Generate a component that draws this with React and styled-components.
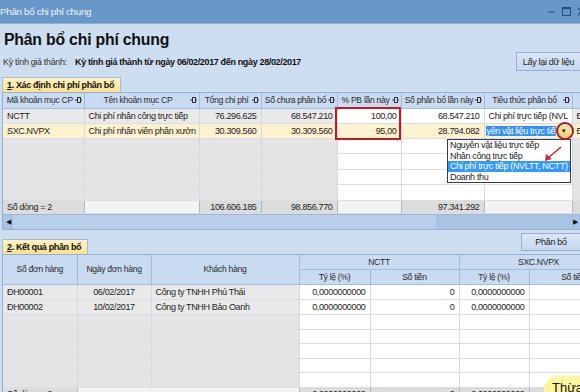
import React from "react";
import styled, { createGlobalStyle } from "styled-components";

const FONT = `"Liberation Sans", Arial, sans-serif`;

const Global = createGlobalStyle`
  html, body { margin: 0; padding: 0; }
  body {
    width: 580px; height: 392px; overflow: hidden;
    background: #cedef1;
    font-family: ${FONT};
    font-size: 9px;
    letter-spacing: -0.35px;
    color: #1e1e1e;
  }
`;

const Window = styled.div`
  position: relative;
  width: 580px;
  height: 392px;
  overflow: hidden;
  background: #cedef1;
`;

const TitleBar = styled.div`
  height: 23px;
  display: flex;
  align-items: center;
  justify-content: space-between;
  background: #6798c9;
  border-bottom: 1px solid #8fb2d9;
  color: #eef4fb;
  font-size: 9.8px;
  letter-spacing: -0.3px;
`;

const WinControls = styled.div`
  display: flex;
  align-items: center;
  gap: 6px;
  margin-right: -6px;
`;

const Heading = styled.h1`
  margin: 5px 0 0 4px;
  height: 22px;
  line-height: 22px;
  font-size: 15.8px;
  letter-spacing: -0.2px;
  font-weight: bold;
  color: #101010;
`;

const PeriodRow = styled.div`
  display: flex;
  align-items: center;
  height: 19px;
  padding-left: 3px;
  margin-top: 1px;
`;

const PeriodLabel = styled.span`
  width: 72px;
  color: #333;
`;

const PeriodValue = styled.span`
  flex: 1;
  font-weight: bold;
  color: #111;
`;

const Button = styled.button`
  font-family: ${FONT};
  font-size: 9px;
  letter-spacing: -0.3px;
  color: #222;
  height: ${(p) => p.$h || 19}px;
  width: ${(p) => p.$w}px;
  padding: 0;
  background: linear-gradient(#d9e6f6, #c6d8ef);
  border: 1px solid #93afd3;
  border-right: none;
  border-radius: 0;
`;

const Section = styled.div`
  position: relative;
  padding-left: 2px;
  margin-top: ${(p) => p.$mt || 0}px;
`;

const TabHead = styled.div`
  display: inline-flex;
  align-items: center;
  height: 14px;
  padding: 0 6px 0 4px;
  background: linear-gradient(#fff3c4, #fbe08f);
  border: 1px solid #a7bcd8;
  border-bottom: none;
  font-weight: bold;
  color: #111;
  u { text-decoration: underline; }
`;

const GridBox = styled.div`
  border: 1px solid #94b0d4;
  border-right: none;
  background: #cedef1;
  overflow: hidden;
`;

const Table = styled.table`
  border-collapse: collapse;
  table-layout: fixed;
  width: ${(p) => p.$w}px;
`;

const Th = styled.th`
  height: 15px;
  box-sizing: border-box;
  padding: 0;
  background: #c8dbf1;
  border-right: 1px solid #a2bcdc;
  border-bottom: 1px solid #a2bcdc;
  font-weight: normal;
  font-size: 8.6px;
  letter-spacing: -0.3px;
  color: #2b2b2b;
  white-space: nowrap;
  overflow: hidden;
  text-align: center;
`;

const HeadInner = styled.div`
  display: flex;
  align-items: center;
  padding: 0 2px;
`;

const HeadText = styled.span`
  flex: 1;
  text-align: center;
  white-space: nowrap;
`;

const Tr = styled.tr`
  height: ${(p) => p.$h || 15}px;
`;

const Td = styled.td`
  padding: 0 4px;
  background: ${(p) => p.$bg || "#ffffff"};
  text-align: ${(p) => p.$align || "left"};
  border-right: 1px solid #d3d9e2;
  border-bottom: 1px solid #d9dee6;
  white-space: nowrap;
  overflow: hidden;
  color: #1d1d1d;
`;

const FootTd = styled(Td)`
  border-top: 1px solid #9fb7d6;
  border-right: 1px solid #aab9cc;
`;

const Scrollbar = styled.div`
  display: flex;
  align-items: center;
  height: 14px;
  background: #a9c3e3;
  border-top: 1px solid #9fb7d6;
`;

const ScrollArrow = styled.span`
  width: 10px;
  font-size: 7px;
  text-align: center;
  color: #111;
`;

const ScrollThumb = styled.div`
  width: 423px;
  height: 14px;
  background: #b9cfea;
`;

const ScrollTrack = styled.div`
  flex: 1;
`;

const SelText = styled.span`
  display: inline-block;
  background: #3390ff;
  color: #fff;
  padding: 0 1px;
  width: 68px;
  overflow: hidden;
  margin-left: -3px;
  vertical-align: middle;
`;

const DropBtn = styled.span`
  position: absolute;
  right: 2px;
  top: 2px;
  width: 12px;
  height: 11px;
  background: linear-gradient(#fbe7a6, #f2cf6e);
  font-size: 6px;
  line-height: 11px;
  text-align: center;
  color: #111;
`;

const RelCell = styled(Td)`
  position: relative;
`;

const RedRect = styled.div`
  position: absolute;
  left: 335px;
  top: 30px;
  width: 62px;
  height: 29px;
  border: 2px solid #c8161d;
  pointer-events: none;
`;

const RedCircle = styled.div`
  position: absolute;
  left: 556px;
  top: 45px;
  width: 14px;
  height: 14px;
  border: 2px solid #b5141a;
  border-radius: 50%;
`;

const DropList = styled.div`
  position: absolute;
  left: 447px;
  top: 62px;
  width: 122px;
  border: 1px solid #3c3c3c;
  background: #fff;
`;

const DropItem = styled.div`
  height: 10.5px;
  line-height: 10.5px;
  padding-left: 2px;
  white-space: nowrap;
  background: ${(p) => (p.$active ? "#3399ff" : "transparent")};
  color: ${(p) => (p.$active ? "#fff" : "#1d1d1d")};
`;

const Arrow = styled.svg`
  position: absolute;
  left: 540px;
  top: 68px;
`;

const Section2Head = styled.div`
  display: flex;
  justify-content: space-between;
  align-items: flex-end;
  height: 24px;
  padding-left: 2px;
`;

const ButtonWrap = styled.div`
  align-self: flex-start;
  margin-top: 3px;
`;

const Tooltip = styled.div`
  position: absolute;
  left: 544px;
  top: 376px;
  width: 70px;
  height: 40px;
  border-radius: 14px;
  background: #fff59d;
  font-size: 13px;
  letter-spacing: 0;
  padding: 4px 0 0 8px;
  color: #111;
`;

const Pin = () => (
  <svg width="7" height="6" viewBox="0 0 7 6">
    <path d="M0 3h2.5" stroke="#333" strokeWidth="1" />
    <rect x="2.5" y="0.5" width="3" height="5" fill="none" stroke="#333" strokeWidth="1" />
    <path d="M5.5 3h1.5" stroke="#333" strokeWidth="1" />
  </svg>
);

const GRAY = "#e9e9e9";
const EMPTY = "#e4e4e4";
const YEL = "#fdf2cf";

const head1 = [
  "Mã khoản mục CP",
  "Tên khoản mục CP",
  "Tổng chi phí",
  "Số chưa phân bổ",
  "% PB lần này",
  "Số phân bổ lần này",
  "Tiêu thức phân bổ",
  "",
];
const cols1 = [81, 115, 62, 76, 64, 83, 88, 60];
const cols2 = [74, 74, 148, 71, 89, 70, 89];

const Grid1 = () => (
  <GridBox>
    <Table $w={cols1.reduce((a, b) => a + b, 0)}>
      <colgroup>
        {cols1.map((w, i) => (
          <col key={i} style={{ width: w }} />
        ))}
      </colgroup>
      <thead>
        <tr>
          {head1.map((h, i) => (
            <Th key={i}>
              <HeadInner>
                <HeadText>{h}</HeadText>
                {h && <Pin />}
              </HeadInner>
            </Th>
          ))}
        </tr>
      </thead>
      <tbody>
        <Tr>
          <Td $bg={GRAY}>NCTT</Td>
          <Td $bg={GRAY}>Chi phí nhân công trực tiếp</Td>
          <Td $bg={GRAY} $align="right">76.296.625</Td>
          <Td $bg={GRAY} $align="right">68.547.210</Td>
          <Td $align="right">100,00</Td>
          <Td $align="right">68.547.210</Td>
          <Td>Chi phí trực tiếp (NVL</Td>
          <Td $bg={GRAY}>Đ</Td>
        </Tr>
        <Tr>
          <Td $bg={YEL}>SXC.NVPX</Td>
          <Td $bg={YEL}>Chi phí nhân viên phân xưởn</Td>
          <Td $bg={YEL} $align="right">30.309.560</Td>
          <Td $bg={YEL} $align="right">30.309.560</Td>
          <Td $bg={YEL} $align="right">95,00</Td>
          <Td $bg={YEL} $align="right">28.794.082</Td>
          <RelCell $bg={YEL}>
            <SelText>yên vật liệu trực tiếp</SelText>
            <DropBtn>▼</DropBtn>
          </RelCell>
          <Td $bg={YEL}>Đ</Td>
        </Tr>
        {[0, 1, 2, 3].map((r) => (
          <Tr key={r} $h={15.5}>
            <Td $bg={EMPTY} />
            <Td $bg={EMPTY} />
            <Td $bg={EMPTY} />
            <Td $bg={EMPTY} />
            <Td />
            <Td />
            <Td />
            <Td $bg={EMPTY} />
          </Tr>
        ))}
        <Tr $h={13}>
          <FootTd $bg="#dcdcdc">Số dòng = 2</FootTd>
          <FootTd $bg="#f3f3f3" />
          <FootTd $bg="#dcdcdc" $align="right">106.606.185</FootTd>
          <FootTd $bg="#dcdcdc" $align="right">98.856.770</FootTd>
          <FootTd $bg="#f3f3f3" />
          <FootTd $bg="#dcdcdc" $align="right">97.341.292</FootTd>
          <FootTd $bg="#f3f3f3" />
          <FootTd $bg="#dcdcdc" />
        </Tr>
      </tbody>
    </Table>
    <Scrollbar>
      <ScrollArrow>◀</ScrollArrow>
      <ScrollThumb />
      <ScrollTrack />
      <ScrollArrow>▶</ScrollArrow>
    </Scrollbar>
  </GridBox>
);

const rows2 = [
  ["ĐH00001", "06/02/2017", "Công ty TNHH Phú Thái"],
  ["ĐH00002", "10/02/2017", "Công ty TNHH Bảo Oanh"],
];

const Grid2 = () => (
  <GridBox>
    <Table $w={cols2.reduce((a, b) => a + b, 0)}>
      <colgroup>
        {cols2.map((w, i) => (
          <col key={i} style={{ width: w }} />
        ))}
      </colgroup>
      <thead>
        <tr>
          <Th rowSpan={2}>Số đơn hàng</Th>
          <Th rowSpan={2}>Ngày đơn hàng</Th>
          <Th rowSpan={2}>Khách hàng</Th>
          <Th colSpan={2}>NCTT</Th>
          <Th colSpan={2}>SXC.NVPX</Th>
        </tr>
        <tr>
          <Th>Tỷ lệ (%)</Th>
          <Th>Số tiền</Th>
          <Th>Tỷ lệ (%)</Th>
          <Th>Số tiền</Th>
        </tr>
      </thead>
      <tbody>
        {rows2.map((r) => (
          <Tr key={r[0]}>
            <Td $bg={GRAY}>{r[0]}</Td>
            <Td $bg={GRAY} $align="center">{r[1]}</Td>
            <Td $bg={GRAY}>{r[2]}</Td>
            <Td $align="right">0,0000000000</Td>
            <Td $align="right">0</Td>
            <Td $align="right">0,0000000000</Td>
            <Td $align="right" />
          </Tr>
        ))}
        {[0, 1, 2, 3, 4].map((r) => (
          <Tr key={r} $h={14.6}>
            <Td $bg={EMPTY} />
            <Td $bg={EMPTY} />
            <Td $bg={EMPTY} />
            <Td />
            <Td />
            <Td />
            <Td />
          </Tr>
        ))}
        <Tr $h={14}>
          <FootTd $bg="#dcdcdc">Số dòng = 2</FootTd>
          <FootTd $bg="#f3f3f3" colSpan={2} />
          <FootTd $bg="#dcdcdc" $align="right">0,0000000000</FootTd>
          <FootTd $bg="#dcdcdc" $align="right">0</FootTd>
          <FootTd $bg="#dcdcdc" $align="right">0,0000000000</FootTd>
          <FootTd $bg="#dcdcdc" />
        </Tr>
      </tbody>
    </Table>
  </GridBox>
);

export default function App() {
  return (
    <>
      <Global />
      <Window>
        <TitleBar>
          <span>Phân bổ chi phí chung</span>
          <WinControls>
            <svg width="9" height="9" viewBox="0 0 9 9">
              <path d="M1 5h7" stroke="#2b4f78" strokeWidth="1" />
            </svg>
            <svg width="9" height="9" viewBox="0 0 9 9">
              <rect x="0.5" y="0.5" width="8" height="8" fill="none" stroke="#2b4f78" />
              <path d="M0.5 1.5h8" stroke="#2b4f78" strokeWidth="1.5" />
            </svg>
            <svg width="9" height="9" viewBox="0 0 9 9">
              <path d="M1 1l7 7M8 1l-7 7" stroke="#2b4f78" strokeWidth="1.2" />
            </svg>
          </WinControls>
        </TitleBar>
        <Heading>Phân bổ chi phí chung</Heading>
        <PeriodRow>
          <PeriodLabel>Kỳ tính giá thành:</PeriodLabel>
          <PeriodValue>Kỳ tính giá thành từ ngày 06/02/2017 đến ngày 28/02/2017</PeriodValue>
          <Button $w={64}>Lấy lại dữ liệu</Button>
        </PeriodRow>
        <Section $mt={6}>
          <TabHead>
            <span>
              <u>1</u>. Xác định chi phí phân bổ
            </span>
          </TabHead>
          <Grid1 />
          <RedRect />
          <DropList>
            <DropItem>Nguyên vật liệu trực tiếp</DropItem>
            <DropItem>Nhân công trực tiếp</DropItem>
            <DropItem $active>Chi phí trực tiếp (NVLTT, NCTT)</DropItem>
            <DropItem>Doanh thu</DropItem>
          </DropList>
          <RedCircle />
          <Arrow width="24" height="20" viewBox="0 0 24 20">
            <path d="M21 2L8 13" stroke="#d42a2a" strokeWidth="1.6" fill="none" />
            <path d="M5 16l1-7 6 5z" fill="#d42a2a" />
          </Arrow>
        </Section>
        <Section2Head>
          <TabHead>
            <span>
              <u>2</u>. Kết quả phân bổ
            </span>
          </TabHead>
          <ButtonWrap>
            <Button $w={59} $h={18}>Phân bổ</Button>
          </ButtonWrap>
        </Section2Head>
        <Section>
          <Grid2 />
        </Section>
        <Tooltip>Thừa</Tooltip>
      </Window>
    </>
  );
}
